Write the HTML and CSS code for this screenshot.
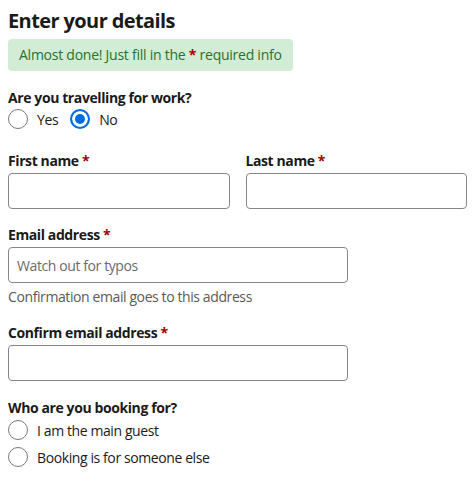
FILE: index.html
```html
<!DOCTYPE html>
<html lang="en">
<head>
    <meta charset="UTF-8">
    <meta name="viewport" content="width=device-width, initial-scale=1.0">
    <title>Enter your details</title>
    <link rel="stylesheet" href="styles.css">
</head>
<body>
    <div class="container">
        <h1>Enter your details</h1>
        <div class="notice">Almost done! Just fill in the <span class="req">*</span> required info</div>

        <div class="group">
            <div class="label">Are you travelling for work?</div>
            <div class="radios inline">
                <label class="radio"><input type="radio" name="work"><span class="dot"></span>Yes</label>
                <label class="radio"><input type="radio" name="work" checked><span class="dot"></span>No</label>
            </div>
        </div>

        <div class="row">
            <div class="field">
                <label class="label" for="first">First name <span class="req">*</span></label>
                <input type="text" id="first">
            </div>
            <div class="field">
                <label class="label" for="last">Last name <span class="req">*</span></label>
                <input type="text" id="last">
            </div>
        </div>

        <div class="field narrow">
            <label class="label" for="email">Email address <span class="req">*</span></label>
            <input type="email" id="email" placeholder="Watch out for typos">
            <div class="hint">Confirmation email goes to this address</div>
        </div>

        <div class="field narrow">
            <label class="label" for="confirm">Confirm email address <span class="req">*</span></label>
            <input type="email" id="confirm">
        </div>

        <div class="group last">
            <div class="label">Who are you booking for?</div>
            <div class="radios">
                <label class="radio"><input type="radio" name="guest"><span class="dot"></span>I am the main guest</label>
                <label class="radio"><input type="radio" name="guest"><span class="dot"></span>Booking is for someone else</label>
            </div>
        </div>
    </div>
</body>
</html>
```
FILE: styles.css
```css
body {
    margin: 0;
    padding: 0 8px;
    font-family: "Open Sans", "Noto Sans", sans-serif;
    font-size: 14px;
    letter-spacing: -0.4px;
    color: #1a1a1a;
    background-color: #fff;
}
.container {
    width: 459px;
}
h1 {
    margin: 0;
    padding-top: 8px;
    font-size: 20px;
    line-height: 26px;
    font-weight: 700;
    letter-spacing: -0.6px;
}
.notice {
    display: inline-block;
    margin-top: 5px;
    padding: 0 11px;
    height: 32px;
    line-height: 32px;
    background-color: #d3ecd5;
    color: #23752a;
    border-radius: 4px;
    letter-spacing: -0.25px;
}
.req {
    color: #a30000;
    font-weight: 700;
}
.group {
    margin-top: 17px;
}
.group.last {
    margin-top: 17px;
}
.label {
    display: block;
    font-weight: 700;
    line-height: 20px;
}
.radios {
    display: flex;
    flex-direction: column;
    gap: 7px;
    margin-top: 1px;
}
.last .radios {
    margin-top: 2px;
}
.radios.inline {
    flex-direction: row;
    gap: 12px;
}
.radio {
    display: flex;
    align-items: center;
    gap: 9px;
    height: 20px;
    cursor: pointer;
}
.radio input {
    display: none;
}
.dot {
    box-sizing: border-box;
    width: 20px;
    height: 20px;
    border: 1px solid #7a7a7a;
    border-radius: 50%;
    background-color: #fff;
}
.radio input:checked + .dot {
    border: 2px solid #006ce4;
    box-shadow: inset 0 0 0 3px #fff;
    background-color: #006ce4;
}
.row {
    display: flex;
    gap: 16px;
    margin-top: 22px;
}
.row .field {
    flex: 1;
}
.field.narrow {
    width: 340px;
    margin-top: 16px;
}
.field .label {
    margin-bottom: 2px;
}
input[type="text"], input[type="email"] {
    box-sizing: border-box;
    width: 100%;
    height: 36px;
    padding: 0 8px;
    border: 1px solid #868686;
    border-radius: 4px;
    font-family: inherit;
    font-size: 14px;
    letter-spacing: -0.4px;
    color: #1a1a1a;
}
input::placeholder {
    color: #6b6b6b;
}
.hint {
    margin-top: 4px;
    color: #595959;
    line-height: 20px;
}
```
